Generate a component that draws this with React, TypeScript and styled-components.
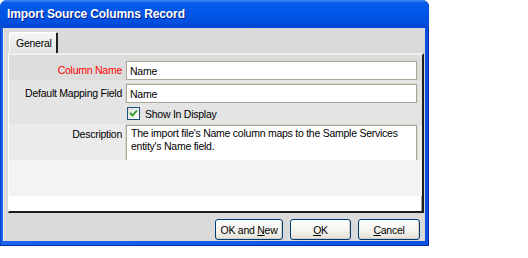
import styled, { createGlobalStyle } from "styled-components";

const GlobalStyle = createGlobalStyle`
  html, body {
    margin: 0;
    padding: 0;
    background: #ffffff;
  }
  body {
    font-family: "Liberation Sans", Arial, sans-serif;
    font-size: 10.5px;
    letter-spacing: -0.25px;
    color: #000000;
  }
`;

// XP style dialog frame
const Window = styled.div`
  width: 429px;
  height: 246px;
  box-sizing: border-box;
  display: flex;
  flex-direction: column;
  border-radius: 7px 7px 0 0;
  background: linear-gradient(90deg, #0840c8 0px, #1a64f0 2px, #0a50e0 100%);
  padding: 0 4px 5px 3px;
  box-shadow: inset -1px 0 0 #0a2fa0, inset 0 -1px 0 #0a2fa0;
`;

const TitleBar = styled.div`
  height: 28px;
  flex: none;
  margin: 0 -4px 0 -3px;
  padding-left: 7px;
  display: flex;
  align-items: center;
  border-radius: 7px 7px 0 0;
  background: linear-gradient(
    180deg,
    #3d8cf8 0px,
    #0a5ce8 3px,
    #0056e8 12px,
    #0050e0 22px,
    #0446d2 28px
  );
  color: #ffffff;
  font-weight: 700;
  font-size: 12px;
  letter-spacing: -0.1px;
  text-shadow: 1px 1px 0 #0a1e8a;
`;

const Body = styled.div`
  flex: 1;
  display: flex;
  flex-direction: column;
  background: #dadada;
  padding: 4px 3px 0 4px;
  border-left: 1px solid #f4f1e4;
`;

const TabStrip = styled.div`
  display: flex;
  padding-left: 1px;
`;

const Tab = styled.div`
  width: 49px;
  height: 21px;
  box-sizing: border-box;
  display: flex;
  align-items: center;
  padding-left: 6px;
  background: linear-gradient(180deg, #f6f6f6 0px, #e2e2e2 100%);
  border-left: 1px solid #ffffff;
  border-top: 1px solid #ffffff;
  border-right: 2px solid #202020;
  border-radius: 2px 2px 0 0;
`;

const Panel = styled.div`
  width: 416px;
  height: 160px;
  box-sizing: border-box;
  display: flex;
  flex-direction: column;
  background: #ffffff;
  border-top: 2px solid #f0f0f0;
  border-left: 1px solid #ffffff;
  border-right: 2px solid #1e1e1e;
  border-bottom: 2px solid #1e1e1e;
  box-shadow: inset -1px 0 0 #a0a0a0;
`;

const Row = styled.div<{ $bg: string; $h: number; $pt: number }>`
  display: grid;
  grid-template-columns: 113px 1fr;
  column-gap: 4px;
  align-items: start;
  height: ${(p) => p.$h}px;
  box-sizing: border-box;
  padding: ${(p) => p.$pt}px 5px 0 0;
  background: ${(p) => p.$bg};
`;

const Label = styled.div<{ $required?: boolean }>`
  text-align: right;
  padding-top: 3px;
  white-space: nowrap;
  color: ${(p) => (p.$required ? "#ff0000" : "#000000")};
`;

const TextBox = styled.div`
  height: 19px;
  box-sizing: border-box;
  padding: 3px 3px 0;
  background: #ffffff;
  border: 1px solid #a9a797;
  box-shadow: 0 0 0 1px #dcdad0;
  white-space: nowrap;
`;

const TextArea = styled(TextBox)`
  height: 61px;
  white-space: normal;
  line-height: 13px;
  padding: 1px 4px;
`;

const Filler = styled.div<{ $bg: string; $h: number }>`
  height: ${(p) => p.$h}px;
  background: ${(p) => p.$bg};
`;

const CheckRow = styled.label`
  display: flex;
  align-items: center;
  gap: 5px;
  padding-left: 1px;
`;

const CheckBox = styled.span`
  width: 13px;
  height: 13px;
  box-sizing: border-box;
  display: inline-flex;
  align-items: center;
  justify-content: center;
  border: 1px solid #1c5180;
  background: linear-gradient(135deg, #dcdcd6 0%, #ffffff 100%);
`;

const Footer = styled.div`
  display: flex;
  justify-content: flex-end;
  gap: 7px;
  padding: 6px 2px 0 0;
`;

const Button = styled.button<{ $w: number }>`
  width: ${(p) => p.$w}px;
  height: 21px;
  box-sizing: border-box;
  padding: 0;
  font-family: inherit;
  font-size: 10.5px;
  letter-spacing: -0.25px;
  color: #000000;
  border: 1px solid #003c74;
  border-radius: 3px;
  background: linear-gradient(180deg, #ffffff 0%, #f3f2ec 60%, #e3e1d6 100%);
  box-shadow: inset -1px -1px 0 #d6d0c5;
`;

const Key = styled.span`
  text-decoration: underline;
`;

function Check() {
  return (
    <svg width="9" height="9" viewBox="0 0 9 9">
      <path d="M1 4 L3.5 6.5 L8 1.5" fill="none" stroke="#21a121" strokeWidth="1.8" />
    </svg>
  );
}

export default function App() {
  return (
    <>
      <GlobalStyle />
      <Window>
        <TitleBar>Import Source Columns Record</TitleBar>
        <Body>
          <TabStrip>
            <Tab>General</Tab>
          </TabStrip>
          <Panel>
            <Row $bg="#dcdcdc" $h={25} $pt={6}>
              <Label $required>Column Name</Label>
              <TextBox>Name</TextBox>
            </Row>
            <Row $bg="#e4e4e4" $h={23} $pt={4}>
              <Label>Default Mapping Field</Label>
              <TextBox>Name</TextBox>
            </Row>
            <Row $bg="#e4e4e4" $h={21} $pt={4}>
              <span />
              <CheckRow>
                <CheckBox>
                  <Check />
                </CheckBox>
                Show In Display
              </CheckRow>
            </Row>
            <Row $bg="#ebebeb" $h={36} $pt={1}>
              <Label>Description</Label>
              <TextArea>
                The import file's Name column maps to the Sample Services entity's Name field.
              </TextArea>
            </Row>
            <Filler $bg="#f3f3f3" $h={36} />
          </Panel>
          <Footer>
            <Button $w={68}>
              OK and <Key>N</Key>ew
            </Button>
            <Button $w={61}>
              <Key>O</Key>K
            </Button>
            <Button $w={62}>
              <Key>C</Key>ancel
            </Button>
          </Footer>
        </Body>
      </Window>
    </>
  );
}
